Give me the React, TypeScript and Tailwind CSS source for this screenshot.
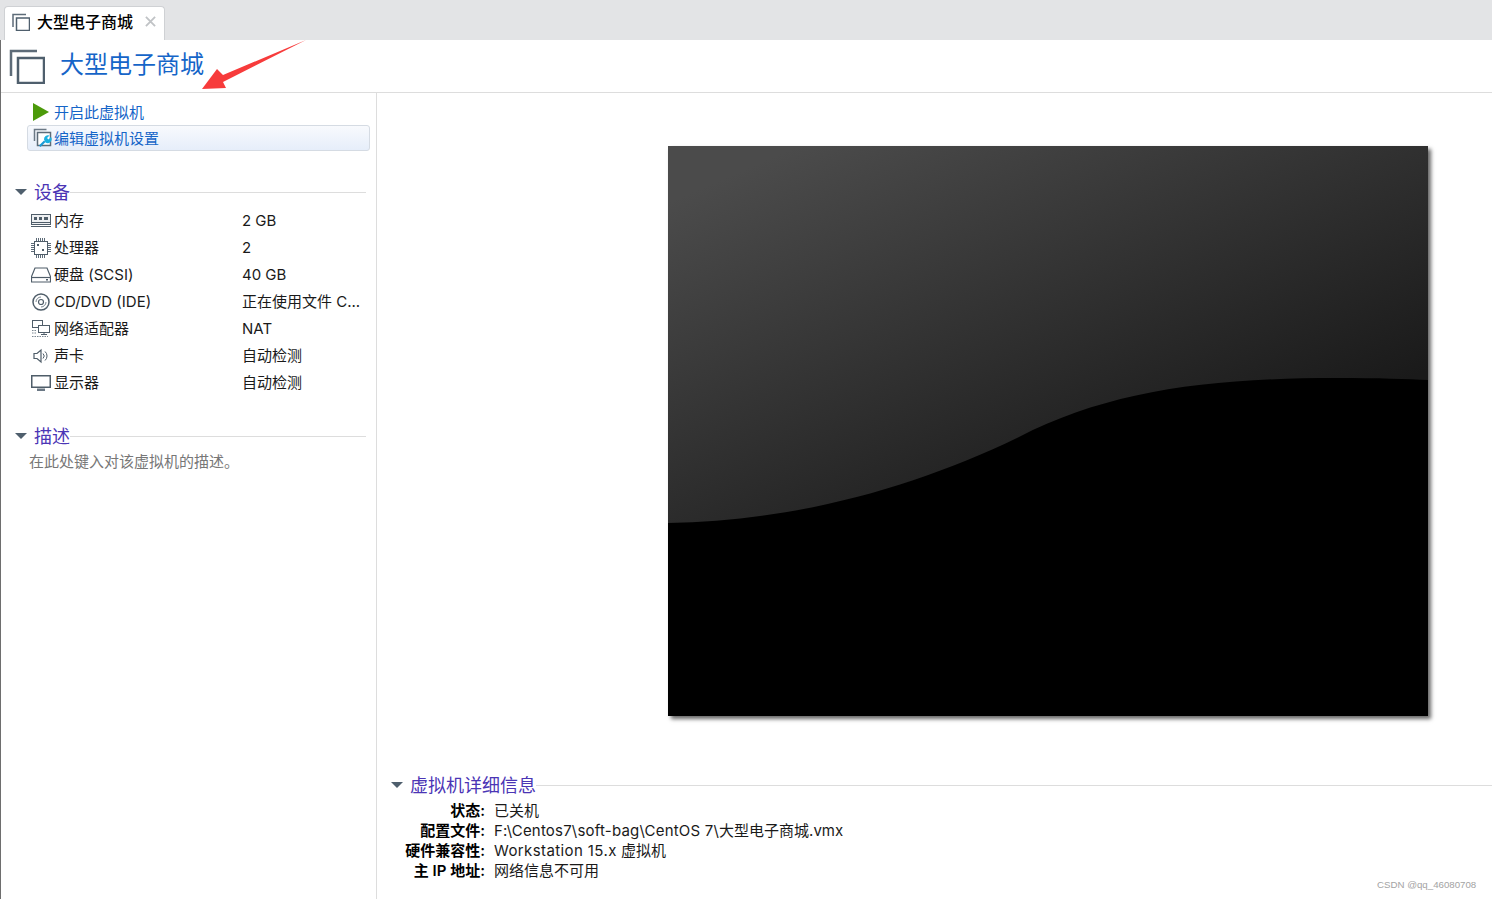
import React from "react";

const FONT = "font-['Inter','Noto_Sans_CJK_SC',sans-serif]";

function VmIcon({ className, stroke = 2.5 }: { className: string; stroke?: number }) {
  return (
    <svg viewBox="0 0 36 36" className={className} fill="none">
      <path d="M2 28V3h26" stroke="#5d6b78" strokeWidth={stroke} />
      <rect x="9" y="10" width="26" height="25" stroke="#4f5f6d" strokeWidth={stroke} fill="#fff" />
    </svg>
  );
}

function EditIcon() {
  return (
    <svg viewBox="0 0 20 20" className="w-5 h-5 shrink-0">
      <path d="M1.500 13V1.500h12" fill="none" stroke="#6b7885" strokeWidth="1.500" />
      <rect x="4.500" y="4.500" width="13" height="13" fill="#fff" stroke="#5d6b78" strokeWidth="1.500" />
      <path d="M6 17.500l5-5 1.500 1.500-5 5z" fill="#1a9ad6" />
      <path d="M11 11.500a4 4 0 0 1 5.500-4l-2.500 2.500 1.500 1.500 2.500-2.500a4 4 0 0 1-5.500 5.500z" fill="#1ab0e0" />
    </svg>
  );
}

function Icon({ name }: { name: string }) {
  const c = "#4f5d69";
  if (name === "mem")
    return (
      <svg viewBox="0 0 20 14" className="w-5 h-3.5">
        <rect x="0.500" y="0.500" width="19" height="10" fill="#eef0f2" stroke={c} />
        <path d="M3 3h3v3H3zM8 3h3v3H8zM13 3h4v3h-4z" fill={c} />
        <path d="M0 8.500h20M0 12.500h20" stroke={c} />
      </svg>
    );
  if (name === "cpu")
    return (
      <svg viewBox="0 0 20 20" className="w-5 h-5">
        <rect x="3.500" y="3.500" width="13" height="13" fill="#fff" stroke={c} />
        <path d="M5.500 0v3M7.500 0v3M9.500 0v3M11.500 0v3M13.500 0v3M5.500 17v3M7.500 17v3M9.500 17v3M11.500 17v3M13.500 17v3M0 5.500h3M0 7.500h3M0 9.500h3M0 11.500h3M0 13.500h3M17 5.500h3M17 7.500h3M17 9.500h3M17 11.500h3M17 13.500h3" stroke="#5d6b78" />
        <path d="M6 6h2v2H6zM11 11h2v2h-2z" fill={c} />
      </svg>
    );
  if (name === "disk")
    return (
      <svg viewBox="0 0 20 16" className="w-5 h-4">
        <path d="M4 1h12l3.500 8.500v5.500H.500V9.500z" fill="#fff" stroke={c} strokeWidth="1.200" />
        <path d="M.500 10.500h19" stroke={c} strokeWidth="1.200" />
        <path d="M15 12h2v1.500h-2z" fill={c} />
      </svg>
    );
  if (name === "cd")
    return (
      <svg viewBox="0 0 18 18" className="w-[18px] h-[18px]">
        <circle cx="9" cy="9" r="8" fill="#fff" stroke={c} strokeWidth="1.500" />
        <circle cx="9" cy="9" r="2.500" fill="none" stroke={c} strokeWidth="1.200" />
        <path d="M4 9a5 5 0 0 1 5-5M14 9a5 5 0 0 1-5 5" fill="none" stroke="#7b8791" />
      </svg>
    );
  if (name === "net")
    return (
      <svg viewBox="0 0 20 18" className="w-5 h-[18px]">
        <rect x="1.500" y="0.500" width="10" height="7" fill="#fff" stroke={c} />
        <rect x="7.500" y="5.500" width="11" height="7" fill="#fff" stroke={c} />
        <path d="M13 12.500v2M10 14.500h6" stroke={c} />
        <path d="M1 10.500h4M1 13h4M1 16.500h16" stroke="#7b8791" strokeDasharray="1.500 1" />
      </svg>
    );
  if (name === "sound")
    return (
      <svg viewBox="0 0 18 16" className="w-[18px] h-4">
        <path d="M2 5.500h3l4-3.500v12l-4-3.500H2z" fill="#fff" stroke={c} strokeWidth="1.200" />
        <path d="M11 5.500a3.500 3.500 0 0 1 0 5M13 3.500a6 6 0 0 1 0 9" fill="none" stroke={c} />
      </svg>
    );
  return (
    <svg viewBox="0 0 20 16" className="w-5 h-4">
      <rect x="0.750" y="0.750" width="18.500" height="11.500" fill="#fff" stroke={c} strokeWidth="1.500" />
      <path d="M6 13.500h8V16H6z" fill="#6b7885" />
    </svg>
  );
}

function SectionTitle({ title, className }: { title: string; className?: string }) {
  return (
    <div className={`flex items-center h-6 ${className ?? ""}`}>
      <span className="w-0 h-0 border-x-[6px] border-x-transparent border-t-[6px] border-t-[#4f5f6d] shrink-0" />
      <span className="ml-[7px] pt-[2px] text-[18px] leading-6 text-[#4b35b5] whitespace-nowrap">{title}</span>
      <span className="flex-1 h-px bg-[#dddddd]" />
    </div>
  );
}

const devices = [
  ["mem", "内存", "2 GB"],
  ["cpu", "处理器", "2"],
  ["disk", "硬盘 (SCSI)", "40 GB"],
  ["cd", "CD/DVD (IDE)", "正在使用文件 C..."],
  ["net", "网络适配器", "NAT"],
  ["sound", "声卡", "自动检测"],
  ["screen", "显示器", "自动检测"],
];

const details: [string, React.ReactNode][] = [
  ["状态:", "已关机"],
  [
    "配置文件:",
    <>
      <span className="tracking-[0.2px]">F:\Centos7\soft-bag\CentOS 7\</span>大型电子商城.vmx
    </>,
  ],
  [
    "硬件兼容性:",
    <>
      <span className="tracking-[0.4px]">Workstation 15.x</span> 虚拟机
    </>,
  ],
  ["主 IP 地址:", "网络信息不可用"],
];

export default function App() {
  return (
    <div className={`relative w-[1492px] h-[899px] overflow-hidden bg-white text-[15px] text-[#1a1a1a] flex flex-col ${FONT}`}>
      {/* Tab strip */}
      <div className="h-10 bg-[#e3e4e6] flex items-end pl-1 shrink-0">
        <div className="w-[161px] h-[34px] bg-white rounded-t-[4px] border border-b-0 border-[#cfd1d4] flex items-center pl-[7px] pb-1">
          <VmIcon className="w-[18px] h-[18px] shrink-0" stroke={3} />
          <span className="ml-[7px] text-base font-medium leading-none text-black">大型电子商城</span>
          <svg viewBox="0 0 12 12" className="ml-3 w-[11px] h-[11px]">
            <path d="M1 1l10 10M11 1L1 11" stroke="#c0c3c6" strokeWidth="2" />
          </svg>
        </div>
      </div>

      <div className="flex-1 flex flex-col border-l border-[#6e6e6e] min-h-0">
        {/* Title */}
        <div className="h-[53px] border-b border-[#dddddd] flex items-center pl-2 shrink-0">
          <VmIcon className="w-9 h-9 shrink-0" />
          <span className="ml-[15px] mb-[3px] text-2xl leading-none text-[#1565c8]">大型电子商城</span>
        </div>

        <div className="flex-1 flex min-h-0">
          {/* Left pane */}
          <aside className="w-[376px] border-r border-[#dddddd] pt-[6px] flex flex-col shrink-0">
            <div className="h-[26px] flex items-center pl-8 text-[#1565c8]">
              <span className="w-0 h-0 border-y-[9px] border-y-transparent border-l-[16px] border-l-[#4c9a0a]" />
              <span className="ml-[5px] pt-[2px]">开启此虚拟机</span>
            </div>
            <div className="h-[26px] ml-[26px] mr-[6px] flex items-center pl-[5px] rounded-[3px] border border-[#d5dbe3] bg-gradient-to-b from-[#f8fafd] to-[#e6eefa] text-[#1565c8]">
              <EditIcon />
              <span className="ml-px pt-[2px]">编辑虚拟机设置</span>
            </div>

            <SectionTitle title="设备" className="mt-[29px] ml-[14px] mr-[10px]" />
            <div className="mt-[3px]">
              {devices.map(([icon, label, value]) => (
                <div key={label} className="h-[27px] flex items-center">
                  <div className="w-[53px] pl-[29px] pr-[3px] flex justify-center shrink-0">
                    <Icon name={icon} />
                  </div>
                  <span className="w-[188px] pt-[2px] shrink-0 whitespace-nowrap">{label}</span>
                  <span className="pt-[2px] whitespace-nowrap">{value}</span>
                </div>
              ))}
            </div>

            <SectionTitle title="描述" className="mt-7 ml-[14px] mr-[10px]" />
            <div className="h-[26px] pt-px leading-[26px] pl-7 text-[#777777]">在此处键入对该虚拟机的描述。</div>
          </aside>

          {/* Right pane */}
          <main className="flex-1 min-w-0 flex flex-col">
            <div className="mt-[53px] ml-[291px] w-[760px] h-[570px] shadow-[3px_3px_4px_rgba(0,0,0,0.6)] shrink-0">
              <svg viewBox="0 0 760 570" className="w-full h-full block">
                <defs>
                  <linearGradient id="glow" gradientUnits="userSpaceOnUse" x1="130" y1="0" x2="313" y2="419">
                    <stop offset="0" stopColor="#4b4b4b" />
                    <stop offset="1" stopColor="#1a1a1a" />
                  </linearGradient>
                </defs>
                <rect width="760" height="570" fill="url(#glow)" />
                <path d="M0 377C130 375 250 340 351 291C440 245 540 232 669 232C710 232 740 233 760 234V570H0Z" fill="#000" />
              </svg>
            </div>

            <SectionTitle title="虚拟机详细信息" className="mt-[57px] ml-[14px]" />
            <div className="mt-[3px] flex flex-col">
              {details.map(([label, value]) => (
                <div key={label} className="h-5 flex items-center leading-5 pt-[2px]">
                  <span className="w-[108px] text-right font-semibold text-black whitespace-nowrap shrink-0">{label}</span>
                  <span className="ml-[9px] whitespace-nowrap">{value}</span>
                </div>
              ))}
            </div>
          </main>
        </div>
      </div>

      {/* Annotation arrow drawn over the screenshot */}
      <svg viewBox="0 0 110 52" className="absolute left-[200px] top-[39px] w-[110px] h-[52px]">
        <path d="M106 1L23 36L17 30L2 50L26 49L23 43Z" fill="#f73b3b" />
      </svg>

      <span className="absolute left-[1377px] top-[879px] text-[9.7px] leading-3 text-[#a3a3a3] font-['Liberation_Sans',sans-serif] whitespace-nowrap">
        CSDN @qq_46080708
      </span>
    </div>
  );
}
